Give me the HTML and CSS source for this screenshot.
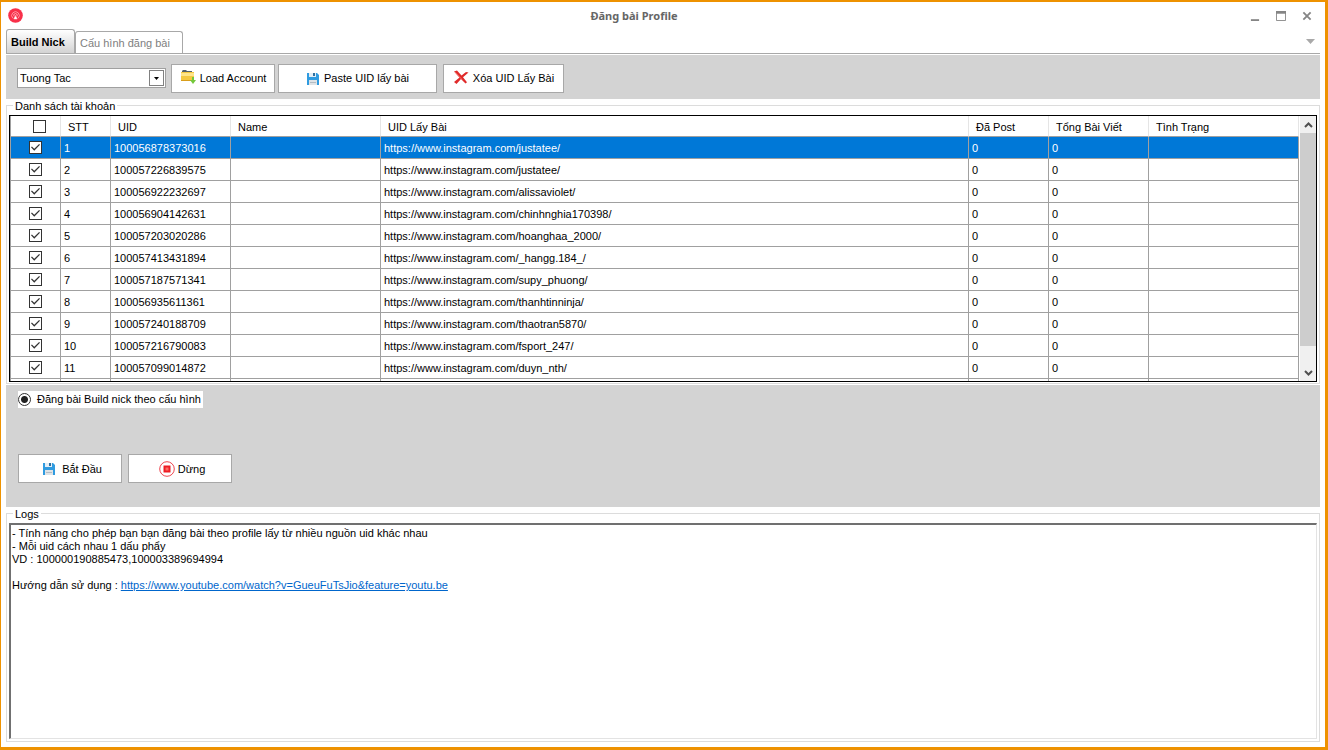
FILE: index.html
```html
<!DOCTYPE html>
<html lang="vi">
<head>
<meta charset="utf-8">
<title>Đăng bài Profile</title>
<link rel="stylesheet" href="styles.css">
</head>
<body>
<svg class="defs" aria-hidden="true">
  <symbol id="disk" viewBox="0 0 14 14">
    <path d="M1 1h10l2 2v10H1z" fill="#2f9be0"/>
    <path d="M3 1h7v4H3z" fill="#e4eef6"/><path d="M7 1h2v3H7z" fill="#2e6f9f"/>
    <path d="M3 8h8v5H3z" fill="#dfe3e6"/><path d="M4 10h6v1H4z" fill="#b3bcc3"/>
  </symbol>
</svg>
<div class="window">
  <header class="titlebar">
    <svg class="logo" viewBox="0 0 15 15" aria-hidden="true">
      <circle cx="7.500" cy="7.500" r="7.300" fill="#f8304a"/>
      <path d="M4.800 10.200A3.800 3.800 0 1 1 10.200 10.200" fill="none" stroke="#ff9ca8" stroke-width=".9"/>
      <path d="M6.200 8.300A1.700 1.700 0 1 1 8.800 8.300" fill="none" stroke="#ffc4cb" stroke-width=".8"/>
      <path d="M7.500 7v2M5.800 11l1.200-2.500h1L9.200 11z" fill="#fff" stroke="#ffd5da" stroke-width=".5"/>
    </svg>
    <h1 class="title">Đăng bài Profile</h1>
    <div class="controls">
      <button class="control" aria-label="Minimize"><svg viewBox="0 0 11 11"><path d="M1 9h9v2H1z" fill="#858585"/></svg></button>
      <button class="control" aria-label="Maximize"><svg viewBox="0 0 11 11"><path d="M.5 1h10v9.500H.5z" fill="none" stroke="#858585"/><path d="M0 0h11v3H0z" fill="#858585"/></svg></button>
      <button class="control" aria-label="Close"><svg viewBox="0 0 11 11"><path d="M1.500 1.500l8 8M9.500 1.500l-8 8" stroke="#858585" stroke-width="2"/></svg></button>
    </div>
  </header>
  <nav class="tabs" role="tablist">
    <button class="tab tab-active" role="tab" aria-selected="true">Build Nick</button>
    <button class="tab" role="tab" aria-selected="false">Cấu hình đăng bài</button>
    <button class="tab-menu" aria-label="Tabs"><svg viewBox="0 0 9 5"><path d="M0 0h9L4.500 5z" fill="#a9a9a9"/></svg></button>
  </nav>
  <main class="page">
    <div class="panel toolbar">
      <div class="combo">
        <select class="combo-field" aria-label="Account group"><option>Tuong Tac</option></select>
        <span class="combo-arrow"><svg viewBox="0 0 5 3"><path d="M0 0h5L2.500 3z" fill="#000"/></svg></span>
      </div>
      <button class="button toolbar-load"><svg class="icon-folder" viewBox="0 0 16 15" aria-hidden="true"><path d="M2 3V1l1-1h3l1 1h5v2z" fill="#53606c"/><path d="M1 2h13v9H1z" fill="#f5c842"/><path d="M1 3h13v3H1z" fill="#ffe58a"/><path d="M1 10h13v1H1z" fill="#d99e1c"/><path d="M12 7h2v3h2l-3 4-3-4h2z" fill="#73c83b"/></svg>Load Account</button>
      <button class="button toolbar-paste"><svg class="icon" aria-hidden="true"><use href="#disk"/></svg>Paste UID lấy bài</button>
      <button class="button toolbar-delete"><svg class="icon-folder" viewBox="0 0 16 15" aria-hidden="true"><path d="M1 1.500L4 .5l4.500 5L13 2l2.500.5L10 7.300l4 5-1.500 1.200L8 9l-4.500 5-2.500-2 5.500-4.500z" fill="#e02a2a"/><path d="M2 2l7 7.500" stroke="#f46a64" fill="none"/></svg>Xóa UID Lấy Bài</button>
    </div>
    <section class="group">
      <h2 class="group-title">Danh sách tài khoản</h2>
      <div class="grid-frame">
        <div class="grid-view">
        <table class="grid">
          <colgroup><col class="col-check"><col class="col-index"><col class="col-uid"><col class="col-name"><col><col class="col-post"><col class="col-total"><col class="col-state"></colgroup>
          <thead><tr><th class="cell-check-all"><input class="check" type="checkbox" aria-label="Select all"></th><th>STT</th><th>UID</th><th>Name</th><th>UID Lấy Bài</th><th>Đã Post</th><th>Tổng Bài Viết</th><th>Tình Trạng</th></tr></thead>
          <tbody>
            <tr class="selected"><td class="cell-check"><input class="check" type="checkbox" checked aria-label="1"></td><td>1</td><td>100056878373016</td><td></td><td>https://www.instagram.com/justatee/</td><td>0</td><td>0</td><td></td></tr>
            <tr><td class="cell-check"><input class="check" type="checkbox" checked aria-label="2"></td><td>2</td><td>100057226839575</td><td></td><td>https://www.instagram.com/justatee/</td><td>0</td><td>0</td><td></td></tr>
            <tr><td class="cell-check"><input class="check" type="checkbox" checked aria-label="3"></td><td>3</td><td>100056922232697</td><td></td><td>https://www.instagram.com/alissaviolet/</td><td>0</td><td>0</td><td></td></tr>
            <tr><td class="cell-check"><input class="check" type="checkbox" checked aria-label="4"></td><td>4</td><td>100056904142631</td><td></td><td>https://www.instagram.com/chinhnghia170398/</td><td>0</td><td>0</td><td></td></tr>
            <tr><td class="cell-check"><input class="check" type="checkbox" checked aria-label="5"></td><td>5</td><td>100057203020286</td><td></td><td>https://www.instagram.com/hoanghaa_2000/</td><td>0</td><td>0</td><td></td></tr>
            <tr><td class="cell-check"><input class="check" type="checkbox" checked aria-label="6"></td><td>6</td><td>100057413431894</td><td></td><td>https://www.instagram.com/_hangg.184_/</td><td>0</td><td>0</td><td></td></tr>
            <tr><td class="cell-check"><input class="check" type="checkbox" checked aria-label="7"></td><td>7</td><td>100057187571341</td><td></td><td>https://www.instagram.com/supy_phuong/</td><td>0</td><td>0</td><td></td></tr>
            <tr><td class="cell-check"><input class="check" type="checkbox" checked aria-label="8"></td><td>8</td><td>100056935611361</td><td></td><td>https://www.instagram.com/thanhtinninja/</td><td>0</td><td>0</td><td></td></tr>
            <tr><td class="cell-check"><input class="check" type="checkbox" checked aria-label="9"></td><td>9</td><td>100057240188709</td><td></td><td>https://www.instagram.com/thaotran5870/</td><td>0</td><td>0</td><td></td></tr>
            <tr><td class="cell-check"><input class="check" type="checkbox" checked aria-label="10"></td><td>10</td><td>100057216790083</td><td></td><td>https://www.instagram.com/fsport_247/</td><td>0</td><td>0</td><td></td></tr>
            <tr><td class="cell-check"><input class="check" type="checkbox" checked aria-label="11"></td><td>11</td><td>100057099014872</td><td></td><td>https://www.instagram.com/duyn_nth/</td><td>0</td><td>0</td><td></td></tr>
            <tr><td></td><td></td><td></td><td></td><td></td><td></td><td></td><td></td></tr>
          </tbody>
        </table>
        </div>
        <div class="scrollbar">
          <button class="scroll-button" aria-label="Scroll up"><svg viewBox="0 0 9 6"><path d="M1 5l3.500-3.500L8 5" fill="none" stroke="#505050" stroke-width="2"/></svg></button>
          <div class="scroll-track"><div class="scroll-thumb"></div></div>
          <button class="scroll-button" aria-label="Scroll down"><svg viewBox="0 0 9 6"><path d="M1 1l3.500 3.500L8 1" fill="none" stroke="#505050" stroke-width="2"/></svg></button>
        </div>
      </div>
    </section>
    <div class="panel actions">
      <label class="option"><input class="radio" type="radio" name="mode" checked>Đăng bài Build nick theo cấu hình</label>
      <div class="action-row">
        <button class="button action"><svg class="icon" aria-hidden="true"><use href="#disk"/></svg>Bắt Đầu</button>
        <button class="button action action-stop"><svg class="icon-stop" viewBox="0 0 16 16" aria-hidden="true"><circle cx="8" cy="8" r="7.300" fill="#fff" stroke="#ee4650"/><path d="M4.500 4.500h7v7h-7z" fill="#ed1c24"/><path d="M6.500 6.500h3v3h-3z" fill="#ff6b62"/></svg>Dừng</button>
      </div>
    </div>
    <section class="group group-logs">
      <h2 class="group-title">Logs</h2>
      <div class="log" role="log">
        <p>- Tính năng cho phép bạn bạn đăng bài theo profile lấy từ nhiều nguồn uid khác nhau</p>
        <p>- Mỗi uid cách nhau 1 dấu phẩy</p>
        <p>VD : 100000190885473,100003389694994</p>
        <p class="log-help">Hướng dẫn sử dụng : <a class="link" href="https://www.youtube.com/watch?v=GueuFuTsJio&amp;feature=youtu.be">https://www.youtube.com/watch?v=GueuFuTsJio&amp;feature=youtu.be</a></p>
      </div>
    </section>
  </main>
</div>
</body>
</html>
```
FILE: styles.css
```css
* { box-sizing: border-box; }
body, h1, h2, p { margin: 0; }
body, button, select { font: 11px/13px "Liberation Sans", Arial, sans-serif; color: #000; }
button { padding: 0; border: 0; background: none; }
svg { display: block; flex: none; }
.defs { position: absolute; width: 0; height: 0; }

.window {
  display: flex;
  flex-direction: column;
  min-height: 100vh;
  border: solid #ee9200;
  border-width: 2px 3px 3px 1px;
  background: #fff;
}

.titlebar { display: grid; grid-template-columns: 1fr auto 1fr; align-items: center; height: 28px; padding: 0 13px 0 7px; }
.logo { width: 15px; height: 15px; margin-top: -2px; }
.title { padding-right: 52px; font: bold 11px/16px "Noto Sans", "Open Sans", sans-serif; color: #666; }
.controls { display: flex; justify-content: flex-end; gap: 16px; }
.control { width: 10px; height: 10px; }
.control svg { width: 10px; height: 10px; }

.tabs { display: flex; align-items: flex-end; height: 24px; margin: 0 5px; border-bottom: 1px solid #a8a8a8; }
.tab { width: 108px; height: 22px; padding: 2px 4px 0; border: 1px solid #a8a8a8; border-bottom: 0; border-radius: 3px 3px 0 0; background: #fff; color: #808080; text-align: left; white-space: nowrap; }
.tab-active { width: 69px; height: 24px; background: linear-gradient(#fff, #d3d3d3); color: #000; font-weight: bold; }
.tab-menu { width: 9px; height: 5px; margin: 0 5px 9px auto; }
.tab-menu svg { width: 9px; height: 5px; }

.page { display: flex; flex: 1; flex-direction: column; padding: 1px 5px 5px; }
.panel { background: #d3d3d3; }
.toolbar { display: flex; align-items: center; gap: 3px; height: 44px; padding: 2px 11px 0; }
.combo { position: relative; width: 149px; height: 20px; }
.combo-field { width: 100%; height: 100%; padding: 0 20px 0 2px; border: 1px solid #a0a0a0; border-radius: 0; background: #fff; appearance: none; }
.combo-arrow { position: absolute; top: 2px; right: 2px; display: grid; place-items: center; width: 15px; height: 16px; border: 1px solid #808080; pointer-events: none; }
.combo-arrow svg { width: 5px; height: 3px; }
.button { display: flex; align-items: center; justify-content: center; gap: 4px; height: 29px; padding-top: 1px; border: 1px solid #a8a8a8; background: #fff; white-space: nowrap; }
.toolbar-load { width: 104px; margin-left: 2px; }
.toolbar-paste { width: 159px; }
.toolbar-delete { width: 121px; margin-left: 3px; }
.icon { width: 14px; height: 14px; }
.icon-folder { width: 16px; height: 15px; margin-top: -2px; }
.icon-stop { width: 16px; height: 16px; }

.group { display: flex; flex-direction: column; margin-top: 6px; padding: 0 2px 1px; border: 1px solid #dcdcdc; }
.group-title { align-self: flex-start; margin: -6px 0 2px 4px; padding: 0 2px; background: #fff; font-size: 11px; font-weight: normal; line-height: 13px; }
.grid-frame { display: flex; height: 267px; border: 1px solid #000; }
.grid-view { flex: 1; overflow: hidden; border-left: 1px solid #a0a0a0; }
.grid { width: 100%; table-layout: fixed; border-collapse: separate; border-spacing: 0; }
.col-check, .col-index { width: 50px; }
.col-uid { width: 120px; }
.col-name, .col-state { width: 150px; }
.col-post { width: 80px; }
.col-total { width: 100px; }
.grid th { height: 21px; padding: 2px 7px 0; border-right: 1px solid #e5e5e5; border-bottom: 1px solid #a0a0a0; font-weight: normal; text-align: left; }
.grid td { height: 22px; padding: 1px 3px 0; border-right: 1px solid #a0a0a0; border-bottom: 1px solid #a0a0a0; }
.selected td { background: #0078d7; color: #fff; }
.grid .cell-check { padding-top: 0; }
.grid .cell-check-all { padding: 0 0 0 7px; }
.check { display: grid; place-items: center; width: 13px; height: 13px; margin: 0 auto; border: 1px solid #333; background: #fff; appearance: none; }
.check:checked::before { content: ""; width: 9px; height: 7px; background: #333; clip-path: polygon(0 45%, 10% 35%, 36% 68%, 90% 0, 100% 12%, 36% 96%); }

.scrollbar { display: flex; flex-direction: column; width: 17px; padding-left: 1px; }
.scroll-button { display: grid; place-items: center; height: 17px; background: #f0f0f0; }
.scroll-button svg { width: 9px; height: 6px; }
.scroll-track { flex: 1; background: #f0f0f0; }
.scroll-thumb { height: 92%; background: #cdcdcd; }

.actions { height: 122px; margin-top: 1px; padding: 6px 12px; }
.option { display: flex; align-items: center; gap: 6px; width: 185px; height: 17px; background: #fff; white-space: nowrap; }
.radio { width: 13px; height: 13px; margin: 0; border: 1px solid #333; border-radius: 50%; background: radial-gradient(circle, #222 3px, #fff 4px); appearance: none; }
.action-row { display: flex; gap: 6px; margin-top: 46px; }
.action { width: 104px; gap: 6px; padding-left: 4px; }
.action-stop { gap: 3px; }

.group-logs { flex: 1; padding-bottom: 2px; }
.log { flex: 1; padding: 2px 1px; border: solid; border-width: 2px 1px 1px 2px; border-color: #707070 #e3e3e3 #e3e3e3 #707070; }
.log-help { margin-top: 13px; }
.link { color: #0066cc; }
```
